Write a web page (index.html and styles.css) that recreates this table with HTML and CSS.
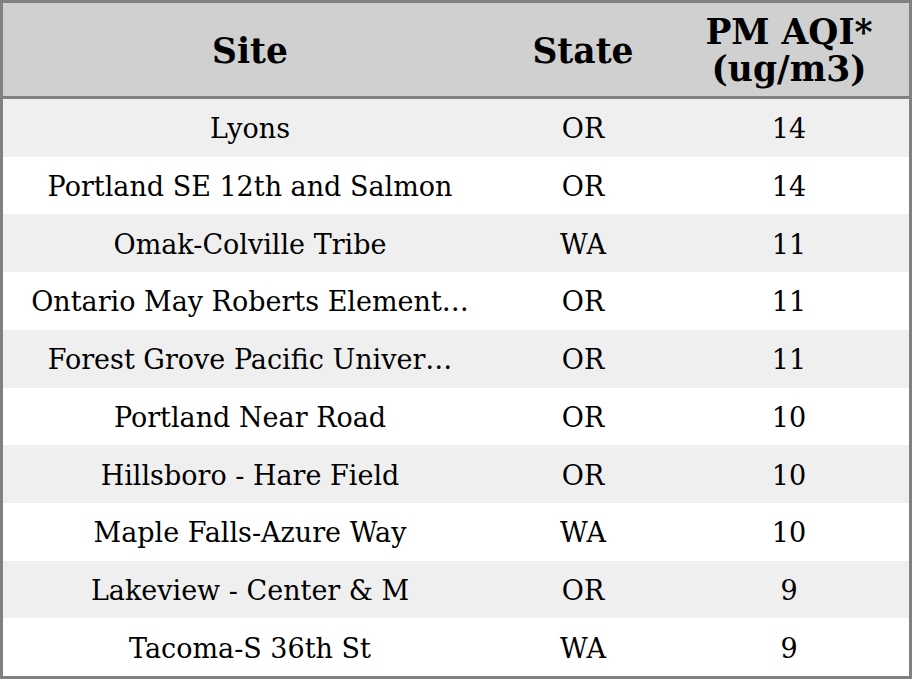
FILE: index.html
```html
<!DOCTYPE html>
<html>
<head>
<meta charset="utf-8">
<link rel="stylesheet" href="styles.css">
</head>
<body>
<div class="table">
  <div class="head">
    <div class="cell site">Site</div>
    <div class="cell state">State</div>
    <div class="cell val">PM AQI*<br>(ug/m3)</div>
  </div>
  <div class="body">
    <div class="row"><div class="cell site">Lyons</div><div class="cell state">OR</div><div class="cell val">14</div></div>
    <div class="row"><div class="cell site">Portland SE 12th and Salmon</div><div class="cell state">OR</div><div class="cell val">14</div></div>
    <div class="row"><div class="cell site">Omak-Colville Tribe</div><div class="cell state">WA</div><div class="cell val">11</div></div>
    <div class="row"><div class="cell site">Ontario May Roberts Element…</div><div class="cell state">OR</div><div class="cell val">11</div></div>
    <div class="row"><div class="cell site">Forest Grove Pacific Univer…</div><div class="cell state">OR</div><div class="cell val">11</div></div>
    <div class="row"><div class="cell site">Portland Near Road</div><div class="cell state">OR</div><div class="cell val">10</div></div>
    <div class="row"><div class="cell site">Hillsboro - Hare Field</div><div class="cell state">OR</div><div class="cell val">10</div></div>
    <div class="row"><div class="cell site">Maple Falls-Azure Way</div><div class="cell state">WA</div><div class="cell val">10</div></div>
    <div class="row"><div class="cell site">Lakeview - Center &amp; M</div><div class="cell state">OR</div><div class="cell val">9</div></div>
    <div class="row"><div class="cell site">Tacoma-S 36th St</div><div class="cell state">WA</div><div class="cell val">9</div></div>
  </div>
</div>
</body>
</html>
```
FILE: styles.css
```css
html, body {
  margin: 0;
  padding: 0;
  background: #ffffff;
}
.table {
  width: 912px;
  height: 679px;
  box-sizing: border-box;
  border: 3px solid #808080;
  display: flex;
  flex-direction: column;
  font-family: "DejaVu Serif", serif;
  color: #000;
}
.head {
  display: grid;
  grid-template-columns: 494px 172px 240px;
  background: #d0d0d0;
  border-bottom: 3px solid #808080;
  height: 93px;
  align-items: center;
  font-weight: bold;
  font-size: 34.5px;
  line-height: 37px;
}
.head .cell {
  padding-top: 3px;
}
.body {
  flex: 1;
  display: grid;
  grid-template-rows: repeat(10, 1fr);
}
.row {
  display: grid;
  grid-template-columns: 494px 172px 240px;
  align-items: center;
  font-size: 27px;
}
.row .cell {
  padding-top: 2px;
}
.row:nth-child(odd) {
  background: #efefef;
}
.cell {
  text-align: center;
  white-space: nowrap;
}
```
